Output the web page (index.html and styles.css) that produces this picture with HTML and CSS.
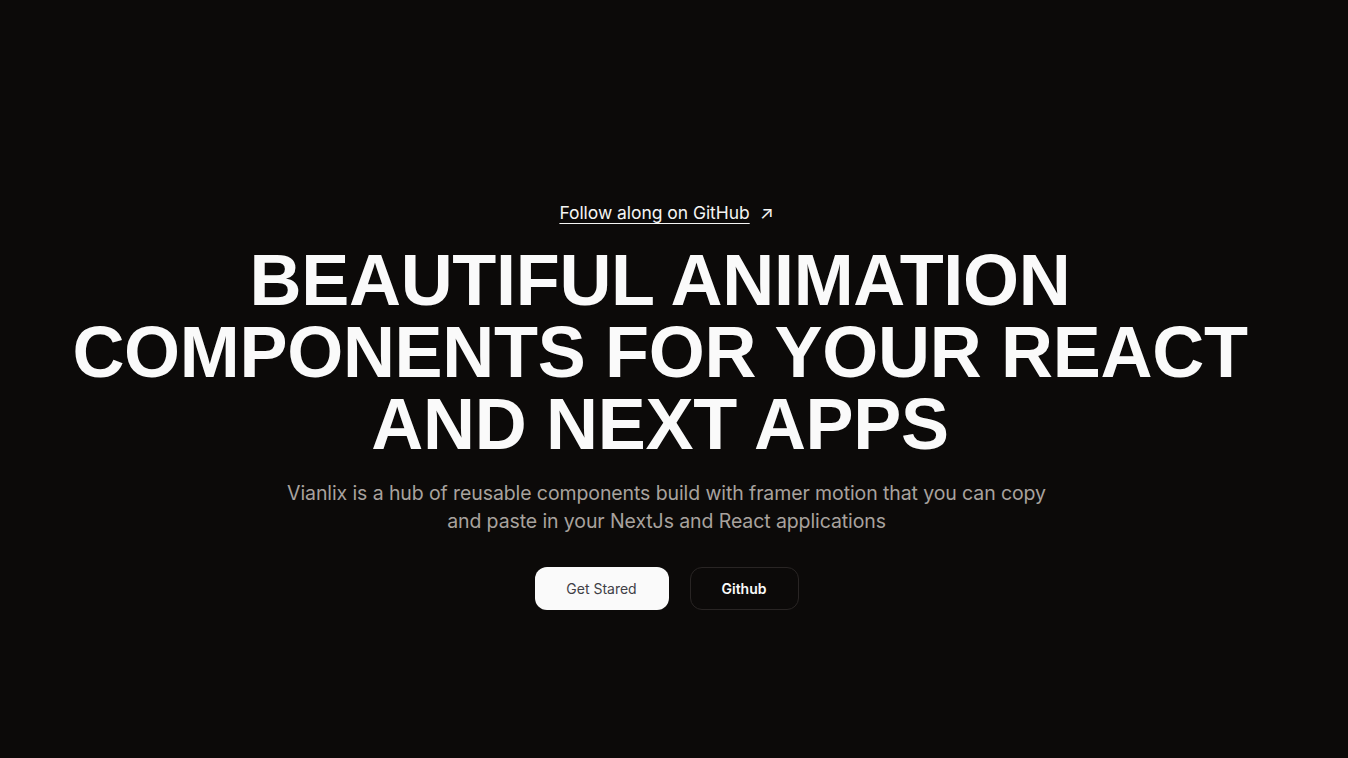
FILE: index.html
```html
<!DOCTYPE html>
<html lang="en">
<head>
<meta charset="utf-8">
<title>Vianlix</title>
<link rel="stylesheet" href="styles.css">
</head>
<body>
<main class="hero">
  <a class="gh-link" href="#"><span class="gh-text">Follow along on GitHub</span><span class="gh-arrow">↗</span></a>
  <h1 class="title">BEAUTIFUL ANIMATION COMPONENTS FOR YOUR REACT AND NEXT APPS</h1>
  <p class="lead">Vianlix is a hub of reusable components build with framer motion that you can copy and paste in your NextJs and React applications</p>
  <div class="actions">
    <a class="btn btn-light" href="#">Get Stared</a>
    <a class="btn btn-dark" href="#">Github</a>
  </div>
</main>
</body>
</html>
```

FILE: styles.css
```css
html, body {
  margin: 0;
  padding: 0;
  background: #0c0a09;
  height: 100%;
}
body {
  font-family: Inter, "Liberation Sans", sans-serif;
  color: #fafafa;
}
.hero {
  box-sizing: border-box;
  width: 1333px;
  padding-top: 200px;
  display: flex;
  flex-direction: column;
  align-items: center;
  text-align: center;
}
.gh-link {
  display: flex;
  align-items: center;
  gap: 10px;
  color: #f5f5f4;
  text-decoration: none;
  font-size: 17.5px;
  line-height: 26px;
  letter-spacing: -0.05px;
}
.gh-text {
  text-decoration: underline;
  text-underline-offset: 4px;
  text-decoration-thickness: 1px;
}
.gh-arrow {
  font-size: 18px;
}
.title {
  margin: 18px 13px 0 0;
  width: 1200px;
  font-family: "Liberation Sans", Arial, sans-serif;
  font-weight: 700;
  font-size: 72px;
  line-height: 72px;
  letter-spacing: -0.3px;
  color: #fafafa;
}
.lead {
  margin: 19px 0 0;
  width: 780px;
  font-size: 19.5px;
  line-height: 28px;
  letter-spacing: -0.1px;
  color: #a8a29e;
}
.actions {
  display: flex;
  gap: 21px;
  margin-top: 32px;
}
.btn {
  box-sizing: border-box;
  height: 43px;
  display: flex;
  align-items: center;
  justify-content: center;
  border-radius: 12px;
  font-size: 14px;
  text-decoration: none;
}
.btn-light {
  width: 134px;
  background: #fafafa;
  color: #3f3f46;
}
.btn-dark {
  width: 109px;
  border: 1px solid #292524;
  color: #fafafa;
  font-weight: 600;
}
```
